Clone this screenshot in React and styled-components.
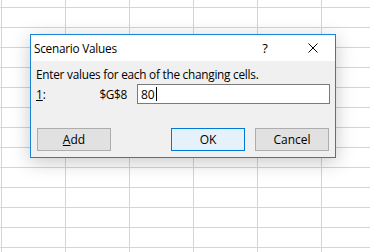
import React from "react";
import styled, { createGlobalStyle } from "styled-components";

const GlobalStyle = createGlobalStyle`
  html, body {
    margin: 0;
    padding: 0;
    background: #ffffff;
  }
  body {
    font-family: "Open Sans", "Noto Sans", "Liberation Sans", sans-serif;
  }
`;

const Sheet = styled.div`
  position: relative;
  width: 370px;
  height: 252px;
  overflow: hidden;
  background-color: #ffffff;
  background-image:
    linear-gradient(to right, #d4d4d8 1px, transparent 1px),
    linear-gradient(to bottom, #d4d4d8 1px, transparent 1px);
  background-size: 64px 20px;
  background-position: 1px 7px;
`;

const Dialog = styled.div`
  position: absolute;
  left: 30px;
  top: 34px;
  width: 304px;
  height: 122px;
  border: 1px solid #1883d7;
  background: #f0f0f0;
  box-shadow: 0 4px 18px rgba(0, 0, 0, 0.22);
  display: flex;
  flex-direction: column;
  color: #000;
  font-size: 12px;
`;

const TitleBar = styled.div`
  height: 26px;
  background: #ffffff;
  display: flex;
  align-items: center;
  padding-left: 3px;
`;

const Title = styled.div`
  flex: 1;
  font-size: 11.8px;
  letter-spacing: -0.25px;
`;

const HelpButton = styled.div`
  width: 12px;
  text-align: center;
  font-size: 13px;
  margin-right: 37px;
`;

const CloseButton = styled.div`
  width: 10px;
  height: 10px;
  margin-right: 17px;
  display: flex;
`;

const Body = styled.div`
  flex: 1;
  display: flex;
  flex-direction: column;
  padding: 6px 5px 6px 5px;
`;

const Prompt = styled.div`
  line-height: 15px;
  letter-spacing: -0.25px;
  font-size: 11.8px;
`;

const ValueRow = styled.div`
  display: flex;
  align-items: center;
  margin-top: 2px;
  gap: 10px;
`;

const Label = styled.div`
  width: 91px;
  display: flex;
  justify-content: space-between;
  font-size: 11.8px;
`;

const CellRef = styled.span`
  letter-spacing: -0.3px;
`;

const ValueInput = styled.div`
  flex: 1;
  height: 18px;
  border: 1px solid #7a7a7a;
  background: #ffffff;
  display: flex;
  align-items: center;
  padding-left: 3px;
  font-size: 12px;
`;

const Caret = styled.span`
  display: inline-block;
  width: 1px;
  height: 14px;
  background: #000;
  margin-left: 1px;
`;

const ButtonRow = styled.div`
  display: flex;
  margin-top: auto;
  padding: 0 1px;
  gap: 10px;
`;

const Spacer = styled.div`
  flex: 1;
`;

const Button = styled.div`
  width: 72px;
  height: 21px;
  display: flex;
  align-items: center;
  justify-content: center;
  border: 1px solid ${(p) => (p.$primary ? "#0078d7" : "#adadad")};
  background: ${(p) => (p.$primary ? "#e5f1fb" : "#e1e1e1")};
  font-size: 12px;
`;

const CloseIcon = () => (
  <svg width="10" height="10" viewBox="0 0 10 10">
    <path d="M0.5 0.5 L9.5 9.5 M9.5 0.5 L0.5 9.5" stroke="#000" strokeWidth="1" />
  </svg>
);

const App = () => {
  return (
    <Sheet>
      <GlobalStyle />
      <Dialog>
        <TitleBar>
          <Title>Scenario Values</Title>
          <HelpButton>?</HelpButton>
          <CloseButton>
            <CloseIcon />
          </CloseButton>
        </TitleBar>
        <Body>
          <Prompt>Enter values for each of the changing cells.</Prompt>
          <ValueRow>
            <Label>
              <span>
                <u>1</u>:
              </span>
              <CellRef>$G$8</CellRef>
            </Label>
            <ValueInput>
              80
              <Caret />
            </ValueInput>
          </ValueRow>
          <ButtonRow>
            <Button>
              <span>
                <u>A</u>dd
              </span>
            </Button>
            <Spacer />
            <Button $primary>OK</Button>
            <Button>Cancel</Button>
          </ButtonRow>
        </Body>
      </Dialog>
    </Sheet>
  );
};

export default App;
